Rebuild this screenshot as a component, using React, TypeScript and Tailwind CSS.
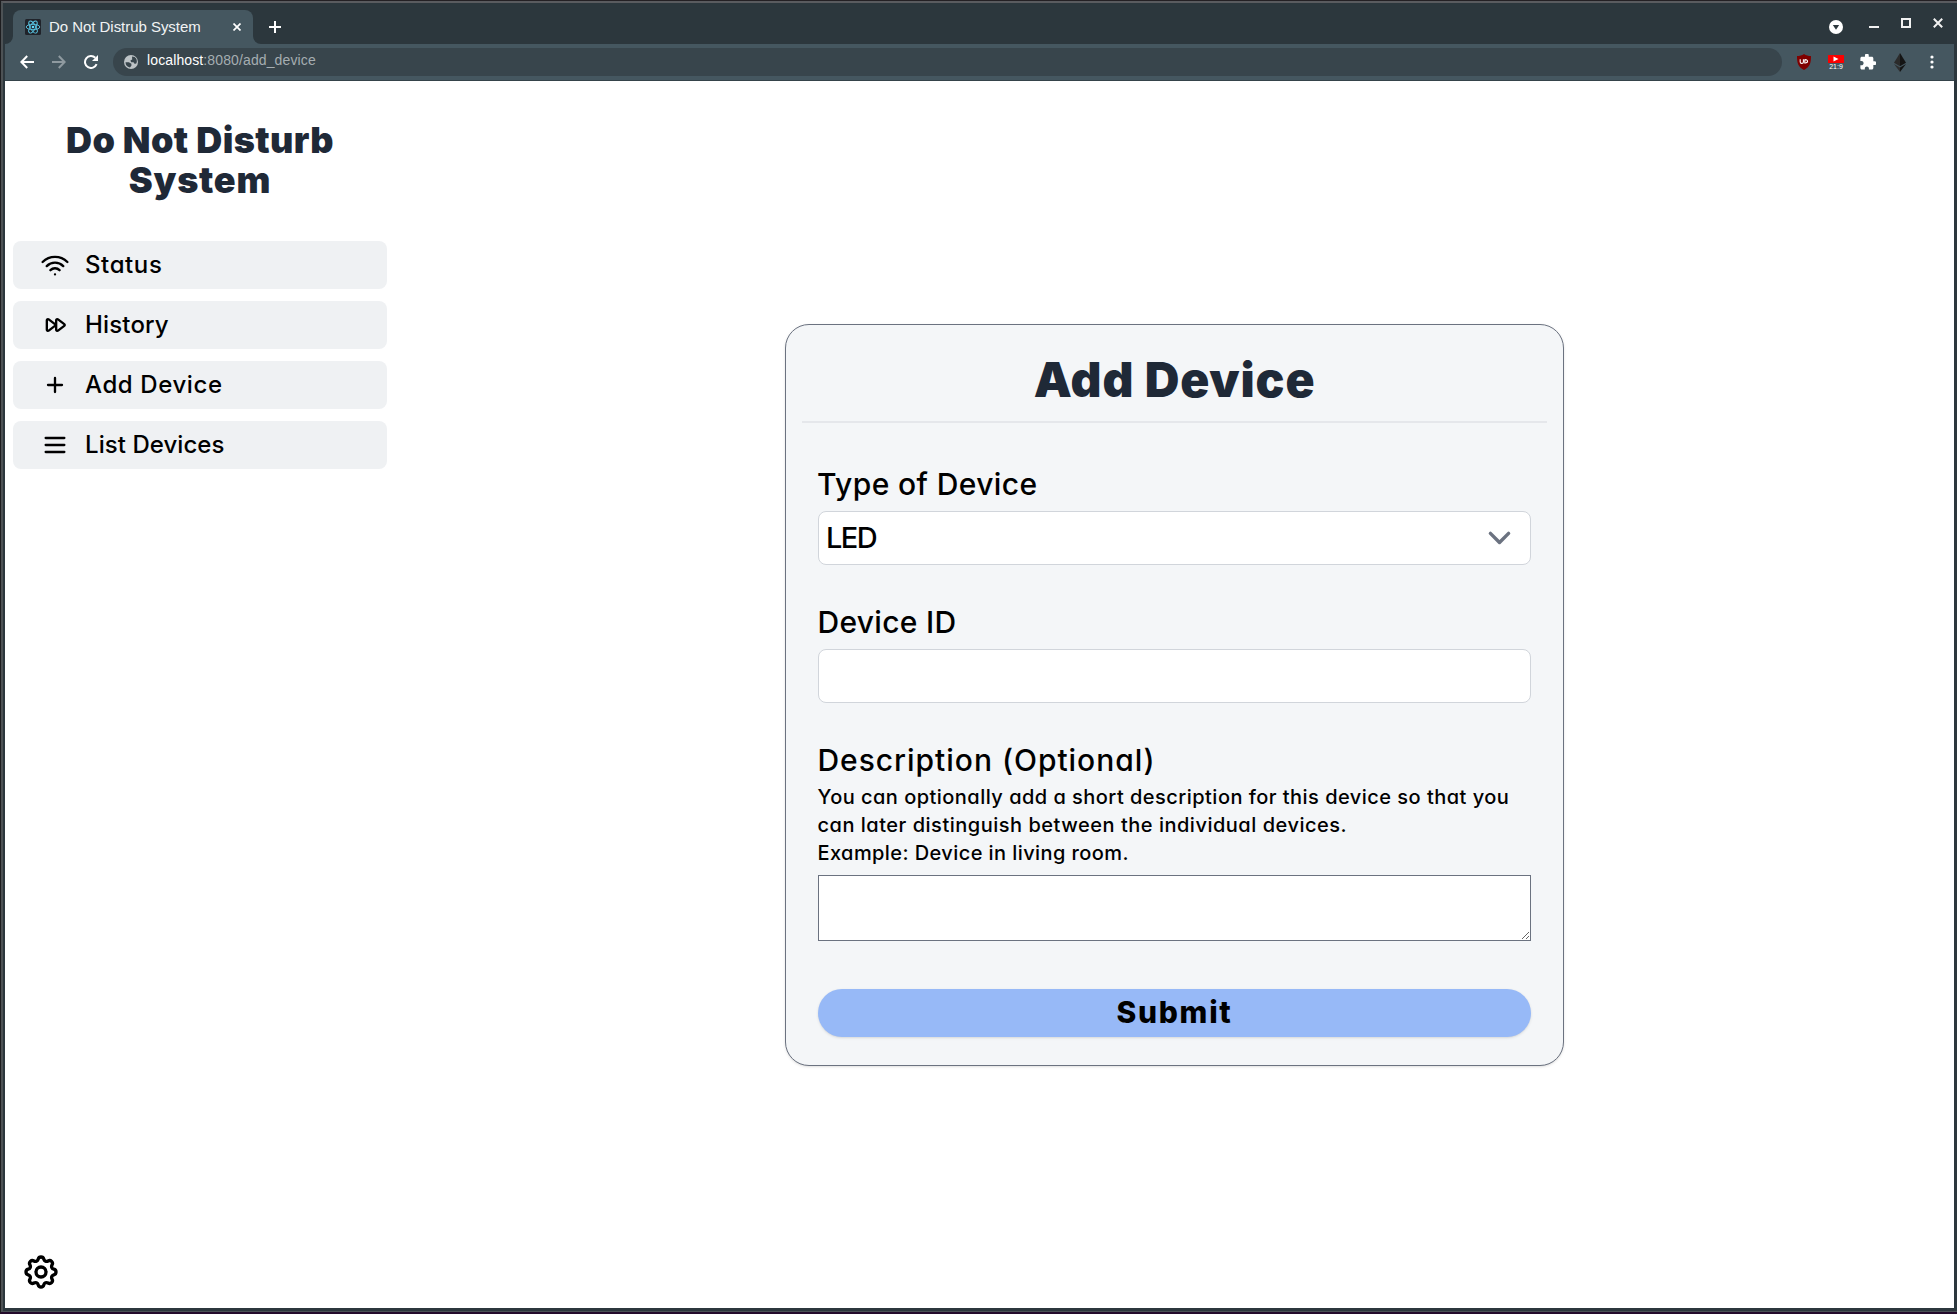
import React from 'react';

const HEADING = "font-[Inter,sans-serif] [font-feature-settings:'cv11'] font-black text-[#1f2937]";

function Outline({ d, className, width = 2 }: { d: string[]; className: string; width?: number }) {
  return (
    <svg viewBox="0 0 24 24" fill="none" stroke="currentColor" strokeWidth={width} strokeLinecap="round" strokeLinejoin="round" className={className}>
      {d.map((p) => (
        <path key={p} d={p} />
      ))}
    </svg>
  );
}

const nav = [
  {
    label: 'Status',
    spacing: 'tracking-[0.6px]',
    d: ['M8.111 16.404a5.5 5.5 0 017.778 0M12 20h.01m-7.08-7.071c3.904-3.905 10.236-3.905 14.141 0M1.394 9.393c5.857-5.857 15.355-5.857 21.213 0'],
  },
  {
    label: 'History',
    spacing: 'tracking-[0.15px]',
    d: [
      'M11.933 12.8a1 1 0 000-1.6L6.6 7.2A1 1 0 005 8v8a1 1 0 001.6.8l5.333-4z',
      'M19.933 12.8a1 1 0 000-1.6l-5.333-4A1 1 0 0013 8v8a1 1 0 001.6.8l5.333-4z',
    ],
  },
  { label: 'Add Device', spacing: 'tracking-[0.6px]', d: ['M12 6v6m0 0v6m0-6h6m-6 0H6'] },
  { label: 'List Devices', spacing: 'tracking-[0.06px]', d: ['M4 6h16M4 12h16M4 18h16'] },
];

const gear = [
  'M10.325 4.317c.426-1.756 2.924-1.756 3.35 0a1.724 1.724 0 002.573 1.066c1.543-.94 3.31.826 2.37 2.37a1.724 1.724 0 001.065 2.572c1.756.426 1.756 2.924 0 3.35a1.724 1.724 0 00-1.066 2.573c.94 1.543-.826 3.31-2.37 2.37a1.724 1.724 0 00-2.572 1.065c-.426 1.756-2.924 1.756-3.35 0a1.724 1.724 0 00-2.573-1.066c-1.543.94-3.31-.826-2.37-2.37a1.724 1.724 0 00-1.065-2.572c-1.756-.426-1.756-2.924 0-3.35a1.724 1.724 0 001.066-2.573c-.94-1.543.826-3.31 2.37-2.37.996.608 2.296.07 2.572-1.065z',
  'M15 12a3 3 0 11-6 0 3 3 0 016 0z',
];

function TabStrip() {
  return (
    <div className="flex h-[41px] items-end bg-[#2c373d]">
      <svg viewBox="0 0 8 8" className="h-2 w-2 shrink-0 fill-[#455760]">
        <path d="M8 0v8H0a8 8 0 0 0 8-8z" />
      </svg>
      <div className="flex h-[34px] w-[240px] items-center rounded-t-lg bg-[#455760] pr-3 pl-3">
        <svg viewBox="0 0 16 16" className="h-4 w-4 shrink-0">
          <rect width="16" height="16" rx="1.5" fill="#20232a" />
          <g fill="none" stroke="#61dafb" strokeWidth="0.9" opacity="0.9">
            <ellipse cx="8" cy="8" rx="6.8" ry="2.7" />
            <ellipse cx="8" cy="8" rx="6.8" ry="2.7" transform="rotate(60 8 8)" />
            <ellipse cx="8" cy="8" rx="6.8" ry="2.7" transform="rotate(120 8 8)" />
          </g>
          <circle cx="8" cy="8" r="1.3" fill="#61dafb" />
        </svg>
        <span className="ml-2 grow text-[15px] leading-5 tracking-[-0.04px] whitespace-nowrap text-[#f1f3f4]">Do Not Distrub System</span>
        <svg viewBox="0 0 8 8" className="h-2 w-2 shrink-0 stroke-white" strokeWidth="1.7">
          <path d="M.5.5l7 7M7.5.5l-7 7" />
        </svg>
      </div>
      <svg viewBox="0 0 8 8" className="h-2 w-2 shrink-0 fill-[#455760]">
        <path d="M0 0v8h8a8 8 0 0 1-8-8z" />
      </svg>
      <svg viewBox="0 0 12 12" className="mb-[11px] ml-2 h-3 w-3 shrink-0 stroke-white" strokeWidth="2">
        <path d="M6 0v12M0 6h12" />
      </svg>
      <div className="mb-[9px] ml-auto flex items-end pr-[11px]">
        <svg viewBox="0 0 14 14" className="mb-px h-3.5 w-3.5">
          <circle cx="7" cy="7" r="7" fill="#fff" />
          <path d="M3.8 5h6.4L7 9.8z" fill="#2c373d" />
        </svg>
        <svg viewBox="0 0 10 10" className="mb-[7px] ml-[26px] h-2.5 w-2.5">
          <path d="M0 9h10" stroke="#f1f1f1" strokeWidth="2" />
        </svg>
        <svg viewBox="0 0 10 10" className="mb-[7px] ml-[22px] h-2.5 w-2.5">
          <path d="M1 1h8v8H1z" fill="none" stroke="#f1f1f1" strokeWidth="2" />
        </svg>
        <svg viewBox="0 0 10 10" className="mb-[7px] ml-[22px] h-2.5 w-2.5">
          <path d="M.8.8l8.4 8.4M9.2.8L.8 9.2" stroke="#f1f1f1" strokeWidth="2" />
        </svg>
      </div>
    </div>
  );
}

function Toolbar() {
  return (
    <div className="flex h-[37px] items-center border-b border-[#35434a] bg-[#455760] pr-5 pl-[15px]">
      <svg viewBox="0 0 14 14" className="h-3.5 w-3.5 shrink-0" fill="none" stroke="#fff" strokeWidth="2">
        <path d="M14 7H1.8M7.2 1L1.4 7l5.8 6" />
      </svg>
      <svg viewBox="0 0 14 14" className="ml-[18px] h-3.5 w-3.5 shrink-0" fill="none" stroke="#8f9aa0" strokeWidth="2">
        <path d="M0 7h12.2M6.8 1l5.8 6-5.8 6" />
      </svg>
      <svg viewBox="0 0 14 14" className="ml-[18px] h-3.5 w-3.5 shrink-0">
        <path d="M12.600 9.200A6 6 0 1 1 11.300 2.800" fill="none" stroke="#fff" strokeWidth="2" />
        <path d="M14 0v6H8z" fill="#fff" />
      </svg>
      <div className="ml-[15px] flex h-7 grow items-center rounded-full bg-[#38454c] pl-[11px]">
        <svg viewBox="0 0 14 14" className="h-3.5 w-3.5 shrink-0">
          <circle cx="7" cy="7" r="7" fill="#bdc3c6" />
          <path d="M1.500 7.200h3.300l2.600 1.500v2l-1.500 1.800A5.600 5.600 0 0 1 1.500 7.200zM8 1.500l2.600.5a5.600 5.600 0 0 1 1.900 6.200L10.800 9 9.500 7.300H7.200L6.400 5.600 8.200 4.500z" fill="#38454c" />
        </svg>
        <span className="mb-[5px] ml-[9px] text-sm leading-5 tracking-[0.12px] whitespace-nowrap text-[#a5adb1]">
          <span className="text-white">localhost</span>:8080/add_device
        </span>
      </div>
      <svg viewBox="0 0 14 16" className="ml-[15px] h-4 w-3.5 shrink-0">
        <path d="M7 0c2 1.500 4.500 2 7 2 0 7-1 11-7 14C1 13 0 9 0 2c2.500 0 5-.500 7-2z" fill="#800000" />
        <path d="M3.200 5.300v2.600c0 2 3.200 2 3.200 0V5.300M7.800 5.700v3.200c3.400.5 3.900-3.600 0-3.200z" fill="none" stroke="#fff" strokeWidth="1.100" />
      </svg>
      <div className="ml-[17px] flex h-[15px] w-4 shrink-0 flex-col items-center">
        <svg viewBox="0 0 16 8" className="h-2 w-4 shrink-0">
          <rect width="16" height="8" fill="#fb0000" />
          <path d="M5.500 1.500v5l5-2.500z" fill="#fff" />
        </svg>
        <span className="text-[7px] leading-[7px] text-white">21:9</span>
      </div>
      <svg viewBox="1.500 1.500 21 21" className="ml-4 h-4 w-4 shrink-0 fill-white">
        <path d="M20.500 11H19V7c0-1.100-.900-2-2-2h-4V3.500a2.500 2.500 0 0 0-5 0V5H4c-1.100 0-2 .900-2 2v3.800h1.500c1.490 0 2.700 1.210 2.700 2.700S4.990 16.200 3.500 16.200H2V20c0 1.100.900 2 2 2h3.800v-1.500c0-1.490 1.210-2.700 2.700-2.700s2.700 1.210 2.700 2.700V22H17c1.100 0 2-.900 2-2v-4h1.500a2.500 2.500 0 0 0 0-5z" />
      </svg>
      <svg viewBox="0 0 12 19" className="ml-[18px] h-[19px] w-3 shrink-0">
        <path d="M6 0L0 9.700l6 3.500z" fill="#2b2b2b" />
        <path d="M6 0l6 9.700-6 3.500z" fill="#141414" />
        <path d="M0 10.900L6 19v-4.500z" fill="#2f2f2f" />
        <path d="M12 10.900L6 19v-4.500z" fill="#141414" />
      </svg>
      <svg viewBox="0 0 4 14" className="ml-[24px] h-3.5 w-1 shrink-0 fill-white">
        <circle cx="2" cy="2" r="1.600" />
        <circle cx="2" cy="7" r="1.600" />
        <circle cx="2" cy="12" r="1.600" />
      </svg>
    </div>
  );
}

function Sidebar() {
  return (
    <aside className="flex w-[390px] shrink-0 flex-col px-2 pt-[39px] pb-4">
      <h1 className={`${HEADING} text-center text-4xl leading-10`}>
        <span className="block tracking-[0.4px]">Do Not Disturb</span>
        <span className="block tracking-[0.75px]">System</span>
      </h1>
      <nav className="mt-[41px] flex flex-col gap-3">
        {nav.map((n) => (
          <a key={n.label} className="flex h-12 items-center gap-4 rounded-lg bg-[#eff1f3] pl-7 text-black">
            <Outline d={n.d} className="h-7 w-7" />
            <span className={`text-2xl leading-8 font-medium ${n.spacing}`}>{n.label}</span>
          </a>
        ))}
      </nav>
      <Outline d={gear} className="mt-auto ml-2 h-10 w-10 text-black" />
    </aside>
  );
}

function AddDeviceCard() {
  return (
    <form className="flex w-[779px] flex-col rounded-3xl border border-[#6b7280] bg-[#f4f6f8] px-4 pt-[31px] pb-7 shadow-sm">
      <h2 className={`${HEADING} text-center text-5xl leading-[48px] tracking-[0.85px]`}>Add Device</h2>
      <hr className="mt-[17px] border-t-2 border-[#e5e7eb]" />
      <div className="flex flex-col px-4 pt-[43px] font-medium text-black">
        <label className="-ml-px text-3xl leading-9 tracking-[0.38px]">Type of Device</label>
        <div className="mt-[9px] flex h-[54px] items-center justify-between rounded-lg border border-[#d1d5db] bg-white pr-3.5 pl-[7px]">
          <span className="text-[29px] leading-9 tracking-[-1.6px]">LED</span>
          <svg viewBox="0 0 20 20" fill="none" stroke="#6b7280" strokeWidth="2.1" strokeLinecap="round" strokeLinejoin="round" className="mb-px h-[33px] w-[33px]">
            <path d="M4.500 7.500l5.500 5.500 5.500-5.500" />
          </svg>
        </div>
        <label className="-ml-[0.5px] mt-[39px] text-3xl leading-9 tracking-[0.3px]">Device ID</label>
        <input className="mt-[9px] h-[54px] rounded-lg border border-[#d1d5db] bg-white px-2 text-3xl" />
        <label className="-ml-[0.5px] mt-[39px] text-3xl leading-9 tracking-[0.97px]">Description (Optional)</label>
        <p className="mt-[5px] -ml-[0.5px] text-xl leading-7 whitespace-nowrap">
          <span className="block tracking-[0.47px]">You can optionally add a short description for this device so that you</span>
          <span className="block tracking-[0.51px]">can later distinguish between the individual devices.</span>
          <span className="block tracking-[0.42px]">Example: Device in living room.</span>
        </p>
        <textarea className="mt-2 h-[66px] border border-[#6b7280] bg-white" />
        <button type="button" className="mt-12 h-12 rounded-full bg-[#97b9f7] pb-0.5 text-3xl leading-9 font-extrabold tracking-[1.7px] shadow">
          Submit
        </button>
      </div>
    </form>
  );
}

export default function App() {
  return (
    <div className="h-[1314px] w-[1957px] overflow-hidden border-t border-b-2 border-l border-t-[#242024] border-b-[#230a2b] border-l-[#1d1d1f] font-['Liberation_Sans',Arial,sans-serif]">
      <div className="flex h-full flex-col border-t-2 border-b border-l-2 border-t-[#5a5b5f] border-b-[#4a5055] border-l-[#4d5255] bg-[#2c373d]">
        <div className="flex min-h-0 grow flex-col border-r-[3px] border-b-[3px] border-l-2 border-[#2c373d]">
          <TabStrip />
          <Toolbar />
          <div className="flex min-h-0 grow bg-white font-[Inter,sans-serif] [font-feature-settings:'cv11']">
            <Sidebar />
            <main className="flex grow items-center justify-center">
              <AddDeviceCard />
            </main>
          </div>
        </div>
      </div>
    </div>
  );
}
